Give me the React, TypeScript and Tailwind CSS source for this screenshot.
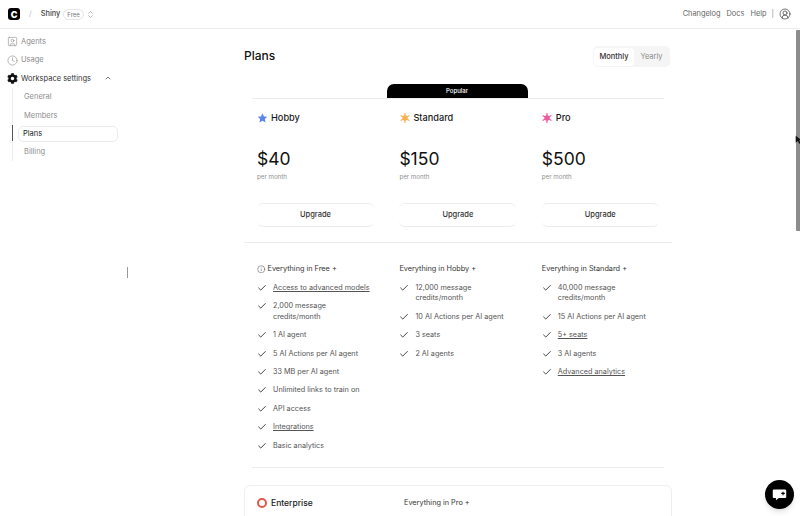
import React from "react";
import { Check, ChevronUp, ChevronsUpDown, Clock, Info, CircleUserRound, SquareUser } from "lucide-react";
import { FaCog } from "react-icons/fa";

interface Plan {
  name: string;
  price: string;
  from: string;
  icon: React.ReactNode;
  features: { label: string; link?: boolean }[];
}

const StarIcon = () => (
  <svg viewBox="0 0 24 24" className="h-[12px] w-[12px]">
    <path d="M12 1.5l3.2 7 7.3.8-5.4 5 1.5 7.5L12 18l-6.6 3.8 1.5-7.5-5.4-5 7.3-.8z" fill="#5b85ec" />
  </svg>
);

const BurstIcon = ({ color }: { color: string }) => (
  <svg viewBox="0 0 24 24" className="h-[10px] w-[10px]">
    <g stroke={color} strokeWidth="3" strokeLinecap="round">
      <path d="M12 1v22" />
      <path d="M2.5 6.5l19 11" />
      <path d="M2.5 17.5l19-11" />
    </g>
    <circle cx="12" cy="12" r="6.5" fill={color} />
  </svg>
);

const plans: Plan[] = [
  {
    name: "Hobby",
    price: "$40",
    from: "Free",
    icon: <StarIcon />,
    features: [
      { label: "Access to advanced models", link: true },
      { label: "2,000 message credits/month" },
      { label: "1 AI agent" },
      { label: "5 AI Actions per AI agent" },
      { label: "33 MB per AI agent" },
      { label: "Unlimited links to train on" },
      { label: "API access" },
      { label: "Integrations", link: true },
      { label: "Basic analytics" },
    ],
  },
  {
    name: "Standard",
    price: "$150",
    from: "Hobby",
    icon: <BurstIcon color="#f7b155" />,
    features: [
      { label: "12,000 message credits/month" },
      { label: "10 AI Actions per AI agent" },
      { label: "3 seats" },
      { label: "2 AI agents" },
    ],
  },
  {
    name: "Pro",
    price: "$500",
    from: "Standard",
    icon: <BurstIcon color="#ee5a9f" />,
    features: [
      { label: "40,000 message credits/month" },
      { label: "15 AI Actions per AI agent" },
      { label: "5+ seats", link: true },
      { label: "3 AI agents" },
      { label: "Advanced analytics", link: true },
    ],
  },
];

const subItems = ["General", "Members", "Plans", "Billing"];

const Sidebar = () => (
  <aside className="w-[244px] shrink-0 pl-[7px] pt-[3.5px] text-[7.5px]">
    <div className="flex h-[18.4px] items-center gap-[3px] text-[#8b8b8b]">
      <SquareUser className="h-[11px] w-[11px]" strokeWidth={1.3} />
      <span>Agents</span>
    </div>
    <div className="flex h-[18.4px] items-center gap-[3px] text-[#8b8b8b]">
      <Clock className="h-[11px] w-[11px]" strokeWidth={1.3} />
      <span>Usage</span>
    </div>
    <div className="flex h-[18.4px] w-[105px] items-center gap-[3px] text-[#333]">
      <FaCog className="h-[11px] w-[11px] text-[#111]" />
      <span className="whitespace-nowrap">Workspace settings</span>
      <ChevronUp className="ml-auto h-[8px] w-[8px]" strokeWidth={2} />
    </div>
    <div className="ml-[5px] flex w-[106px] flex-col border-l border-[#ececec]">
      {subItems.map((item) =>
        item === "Plans" ? (
          <div key={item} className="relative flex h-[18.4px] items-center pl-[6px] text-[#222]">
            <span className="absolute -left-px top-[1px] h-[16px] w-px bg-[#555]" />
            <div className="-ml-[1px] flex h-[16px] w-[100px] items-center rounded-[5px] border border-[#ececec] pl-[4px]">
              {item}
            </div>
          </div>
        ) : (
          <div key={item} className="flex h-[18.4px] items-center pl-[11px] text-[#8f8f8f]">
            {item}
          </div>
        )
      )}
    </div>
  </aside>
);

const PlanHead = ({ plan }: { plan: Plan }) => (
  <div className="pl-[13px]">
    <div className="flex h-[14px] items-center gap-[3px] text-[9.2px] font-medium text-[#1a1a1a]">
      <span className="flex w-[11px] justify-center">{plan.icon}</span>
      <span>{plan.name}</span>
    </div>
    <div className="mt-[22px] text-[17.5px] leading-[24px] text-[#111]">{plan.price}</div>
    <div className="mt-[1px] text-[6.2px] leading-[10px] text-[#8f8f8f]">per month</div>
    <div className="mt-[21px] flex h-[24px] w-[117px] items-center justify-center rounded-[6px] border-y border-[#ececec] text-[7.5px] font-medium text-[#333]">
      Upgrade
    </div>
  </div>
);

const PlanFeatures = ({ plan }: { plan: Plan }) => (
  <div className="pl-[13px]">
    <div className="flex h-[14px] items-center gap-[1px] text-[7.3px] text-[#333]">
      {plan.from === "Free" && <Info className="mr-[1px] h-[8.5px] w-[8.5px] text-[#555]" strokeWidth={1.5} />}
      <span>Everything in {plan.from} +</span>
    </div>
    <ul className="mt-[3px] flex flex-col">
      {plan.features.map((f) => (
        <li key={f.label} className="flex items-start gap-[6px] py-[4px] text-[7.25px] leading-[10.4px] text-[#555]">
          <Check className="h-[10px] w-[10px] shrink-0 text-[#222]" strokeWidth={2} />
          <span className={f.link ? "w-[100px] underline" : "w-[100px]"}>{f.label}</span>
        </li>
      ))}
    </ul>
  </div>
);

export default function App() {
  return (
    <div className="relative h-[516px] w-[800px] overflow-hidden bg-white font-['Inter',sans-serif]">
      <header className="flex h-[29px] items-center border-b border-[#ededed] pl-[8px] pr-[9px] text-[7.4px]">
        <span className="flex h-[12px] w-[12px] items-center justify-center rounded-[3px] bg-black text-[9px] font-black leading-none text-white">
          C
        </span>
        <span className="ml-[9px] text-[#bbb]">/</span>
        <span className="ml-[9px] font-medium text-[#444]">Shiny</span>
        <span className="ml-[3px] rounded-full border border-[#e5e5e5] px-[3px] text-[6px] leading-[9px] text-[#777]">
          Free
        </span>
        <ChevronsUpDown className="ml-[2px] h-[9px] w-[9px] text-[#888]" strokeWidth={1.5} />
        <nav className="ml-auto flex items-center gap-[6px] text-[#666]">
          <span>Changelog</span>
          <span>Docs</span>
          <span className="-mr-[1px]">Help</span>
          <span className="text-[#888]">|</span>
          <CircleUserRound className="-ml-[1px] h-[12px] w-[12px] text-[#444]" strokeWidth={1.5} />
        </nav>
      </header>

      <div className="flex">
        <Sidebar />
        <main className="w-[428px] pt-[16px]">
          <div className="flex h-[23px] items-center justify-between pr-[2px]">
            <h1 className="-mt-[2px] text-[12px] font-medium text-[#111]">Plans</h1>
            <div className="flex h-[21px] w-[77px] items-center rounded-[5px] bg-[#f5f5f5] p-[1px] text-[7.5px]">
              <span className="flex h-[18px] w-[40px] items-center justify-center rounded-[4px] bg-white font-medium text-[#333]">
                Monthly
              </span>
              <span className="flex-1 text-center text-[#8a8a8a]">Yearly</span>
            </div>
          </div>

          <div className="mt-[16px] flex justify-center">
            <div className="-ml-[2px] flex h-[14px] w-[141px] items-center justify-center rounded-t-[7px] bg-black pb-[1px] text-[6px] font-medium text-white">
              Popular
            </div>
          </div>

          <div className="mx-[8px] border-t border-[#ececec]" />
          <div className="grid grid-cols-[142.4px_142.4px_1fr] pt-[12px]">
            {plans.map((plan) => (
              <PlanHead key={plan.name} plan={plan} />
            ))}
          </div>
          <div className="mt-[15px] border-t border-[#ececec]" />
          <div className="grid grid-cols-[142.4px_142.4px_1fr] pt-[19px]">
            {plans.map((plan) => (
              <PlanFeatures key={plan.name} plan={plan} />
            ))}
          </div>
          <div className="mx-[8px] mt-[12px] border-t border-[#ececec]" />
          <div className="mt-[17px] grid h-[60px] grid-cols-3 rounded-[6px] border border-[#efefef] pt-[10px]">
            <div className="flex h-[14px] items-center gap-[4px] pl-[12px] text-[8.5px] font-medium text-[#1a1a1a]">
              <span className="h-[10px] w-[10px] rounded-full border-2 border-[#e2574c]" />
              <span>Enterprise</span>
            </div>
            <div className="flex h-[14px] items-center pl-[17px] text-[7.3px] text-[#333]">Everything in Pro +</div>
          </div>
        </main>
      </div>

      {/* scrollbar and floating chat sit on top of the page */}
      <div className="absolute right-0 top-[30px] h-[201px] w-[4px] rounded-l-[1px] bg-[#8c8c8c]" />
      <svg viewBox="0 0 10 14" className="absolute left-[795px] top-[135px] h-[10px] w-[7px]">
        <path d="M1 1v10l3-2.5 2 4 2-1-2-4h3.5z" fill="#111" />
      </svg>
      <div className="absolute left-[127px] top-[267px] h-[11px] w-px bg-[#999]" />
      <button className="absolute left-[765px] top-[480px] flex h-[29px] w-[29px] items-center justify-center rounded-full bg-black shadow-md">
        <svg viewBox="0 0 24 24" className="h-[17px] w-[17px]">
          <path d="M4 5h16a1.5 1.5 0 0 1 1.5 1.5v9A1.5 1.5 0 0 1 20 17h-9l-4 3v-3H4a1.5 1.5 0 0 1-1.5-1.5v-9A1.5 1.5 0 0 1 4 5z" fill="#fff" />
          <path d="M17 8v5M14.5 10.5h5" stroke="#000" strokeWidth="1.6" />
        </svg>
      </button>
    </div>
  );
}
